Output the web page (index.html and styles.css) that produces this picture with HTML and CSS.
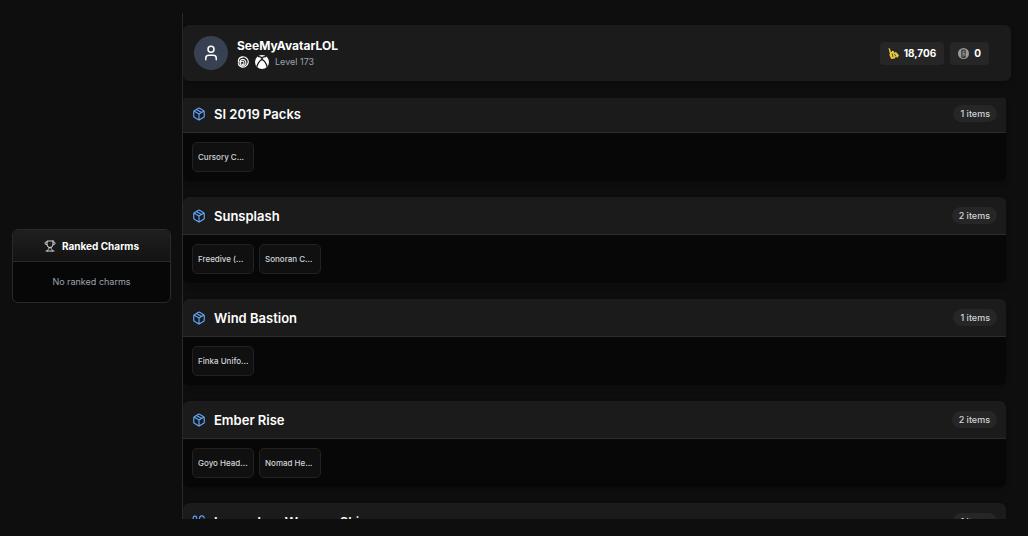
FILE: index.html
```html
<!DOCTYPE html>
<html lang="en">
<head>
<meta charset="utf-8">
<title>Inventory</title>
<link rel="stylesheet" href="styles.css">
</head>
<body>
<svg class="defs" aria-hidden="true">
  <symbol id="package" viewBox="0 0 24 24"><path d="M11 21.73a2 2 0 0 0 2 0l7-4A2 2 0 0 0 21 16V8a2 2 0 0 0-1-1.73l-7-4a2 2 0 0 0-2 0l-7 4A2 2 0 0 0 3 8v8a2 2 0 0 0 1 1.73zM12 22V12M3.3 7l8.7 5 8.7-5M7.5 4.27l9 5.15"/></symbol>
</svg>
<div class="page">
  <aside class="sidebar">
    <section class="charms">
      <h2 class="charms-title">
        <svg class="line-icon trophy" viewBox="0 0 24 24"><path d="M6 9H4.5a2.5 2.5 0 0 1 0-5H6M18 9h1.5a2.5 2.5 0 0 0 0-5H18M4 22h16M10 14.66V17c0 .55-.47.98-.97 1.21C7.85 18.75 7 20.24 7 22M14 14.66V17c0 .55.47.98.97 1.21C16.15 18.75 17 20.24 17 22M18 2H6v7a6 6 0 0 0 12 0V2Z"/></svg>
        Ranked Charms
      </h2>
      <p class="charms-empty">No ranked charms</p>
    </section>
  </aside>
  <main class="content">
    <header class="profile">
      <div class="avatar"><svg class="line-icon user" viewBox="0 0 24 24"><circle cx="12" cy="7" r="4"/><path d="M19 21v-2a4 4 0 0 0-4-4H9a4 4 0 0 0-4 4v2"/></svg></div>
      <div class="identity">
        <h1 class="name">SeeMyAvatarLOL</h1>
        <div class="meta">
          <svg class="ubisoft" viewBox="0 0 24 24" fill="none" stroke="#fff"><path d="M2.2 14.5A10.3 10.3 0 1 0 4 5.5" stroke-width="2.4"/><path d="M3 13C1.5 6 6 2 11.5 2.2" stroke-width="2.4"/><path d="M5.5 14.5C5 8 11 5 15 8s4 9-1 11-9-2-7-6 7-3 7 1-4 4-4 1" stroke-width="2.2"/></svg>
          <svg class="xbox" viewBox="0 0 24 24"><circle cx="12" cy="12" r="12" fill="#fff"/><path d="M5 2.800C8 2.300 10.400 3.600 12 4.800c1.600-1.200 4-2.500 7-2M12 7.200C7.500 10.500 4 15.500 3.600 20M12 7.200c4.500 3.300 8 8.300 8.400 12.800" fill="none" stroke="#1b1b1b" stroke-width="2.300"/><path d="M12 8 9.500 5.500h5Z" fill="#1b1b1b"/></svg>
          <span>Level 173</span>
        </div>
      </div>
      <div class="wallet">
        <div class="coin">
          <svg class="coin-icon" viewBox="0 0 24 24"><path d="M1 0l3 1 3 8 2-3 4 1 1 4 3-3 7 8-3 5-4-2-2 4-8 1-4-9 1-3Z" fill="#e6cc3a"/><path d="M9 12l2 8M14 13l3 5" fill="none" stroke="#4c421a" stroke-width="2"/></svg>
          <span>18,706</span>
        </div>
        <div class="coin">
          <svg class="coin-icon" viewBox="0 0 24 24"><circle cx="12" cy="12" r="12" fill="#999"/><path d="M8 3h8l1 3v14l-2 2H9l-2-2V6Z" fill="#3a3a3a"/><path d="M11 19V7h4M11 12h4v5" fill="none" stroke="#999" stroke-width="2"/></svg>
          <span>0</span>
        </div>
      </div>
    </header>
    <div class="scroller">
      <div class="groups">
        <section class="group">
          <header class="group-head"><svg class="line-icon box"><use href="#package"/></svg><h2 class="group-title">SI 2019 Packs</h2><span class="count">1 items</span></header>
          <div class="items"><div class="item">Cursory C...</div></div>
        </section>
        <section class="group">
          <header class="group-head"><svg class="line-icon box"><use href="#package"/></svg><h2 class="group-title">Sunsplash</h2><span class="count">2 items</span></header>
          <div class="items"><div class="item">Freedive (...</div><div class="item">Sonoran C...</div></div>
        </section>
        <section class="group">
          <header class="group-head"><svg class="line-icon box"><use href="#package"/></svg><h2 class="group-title">Wind Bastion</h2><span class="count">1 items</span></header>
          <div class="items"><div class="item">Finka Unifo...</div></div>
        </section>
        <section class="group">
          <header class="group-head"><svg class="line-icon box"><use href="#package"/></svg><h2 class="group-title">Ember Rise</h2><span class="count">2 items</span></header>
          <div class="items"><div class="item">Goyo Head...</div><div class="item">Nomad He...</div></div>
        </section>
        <section class="group">
          <header class="group-head"><svg class="line-icon box" viewBox="0 0 24 24"><path d="M2 9V5a3 3 0 0 1 6 0v4l6 6M13 19l6-6M16 16l4 4M19 21l2-2M13 8V6a4 4 0 0 1 8-1M5 14l4 4M7 17l-3 3M3 19l2 2"/></svg><h2 class="group-title">Legendary Weapon Skins</h2><span class="count">1 items</span></header>
          <div class="items"></div>
        </section>
      </div>
    </div>
  </main>
</div>
</body>
</html>
```
FILE: styles.css
```css
* { box-sizing: border-box; }
body {
  margin: 0;
  background: #0e0e0e;
  color: #fff;
  font-family: Inter, "Liberation Sans", sans-serif;
}
h1, h2, p { margin: 0; }
.defs { display: none; }
.page {
  display: flex;
  height: 100vh;
  padding: 13px 17px 17px 12px;
  gap: 11px;
  overflow: hidden;
}
.line-icon {
  flex: none;
  fill: none;
  stroke: currentColor;
  stroke-width: 2;
  stroke-linecap: round;
  stroke-linejoin: round;
}
.sidebar {
  flex: 0 0 159px;
  display: flex;
  flex-direction: column;
  justify-content: center;
}
.charms {
  border: 1px solid #2a2a2a;
  border-radius: 6px;
  background: #070707;
  overflow: hidden;
}
.charms-title {
  display: flex;
  align-items: center;
  justify-content: center;
  gap: 6px;
  height: 32px;
  border-bottom: 1px solid #2a2a2a;
  background: linear-gradient(#1f1f1f, #131313);
  font-size: 10px;
  font-weight: 700;
}
.trophy { width: 12px; height: 12px; color: #d1d5db; }
.charms-empty {
  padding: 12px;
  color: #9ca3af;
  font-size: 9px;
  line-height: 16px;
  text-align: center;
}
.content {
  flex: 1;
  min-width: 0;
  display: flex;
  flex-direction: column;
  gap: 17px;
  padding-top: 12px;
  border-left: 1px solid #2a2a2a;
}
.profile {
  flex: none;
  display: flex;
  align-items: center;
  gap: 9px;
  padding: 11px 22px 11px 11px;
  border-radius: 6px;
  background: #1b1b1b;
  box-shadow: 0 3px 6px #00000033;
}
.avatar {
  display: grid;
  place-items: center;
  width: 34px;
  height: 34px;
  border-radius: 50%;
  background: #374151;
}
.user { width: 18px; height: 18px; }
.identity { flex: 1; }
.name { font-size: 12px; font-weight: 700; line-height: 17px; }
.meta {
  display: flex;
  align-items: center;
  gap: 6px;
  height: 16px;
  color: #9ca3af;
  font-size: 9px;
}
.ubisoft { width: 12px; height: 12px; }
.xbox { width: 14px; height: 14px; }
.wallet { display: flex; gap: 6px; }
.coin {
  display: flex;
  align-items: center;
  gap: 5px;
  height: 23px;
  padding: 0 8px;
  border-radius: 4px;
  background: #262626;
  font-size: 10px;
  font-weight: 700;
}
.coin-icon { width: 11px; height: 11px; }
.scroller {
  flex: 1;
  min-height: 0;
  overflow: hidden;
  padding-right: 5px;
}
.groups {
  display: flex;
  flex-direction: column;
  gap: 16px;
  margin-top: -3px;
}
.group {
  border-radius: 6px;
  background: #070707;
  box-shadow: 0 3px 6px #00000033;
}
.group-head {
  display: flex;
  align-items: center;
  gap: 8px;
  height: 38px;
  padding: 0 9px;
  border-bottom: 1px solid #2c2c2c;
  border-radius: 6px 6px 0 0;
  background: #1b1b1b;
}
.box { width: 14px; height: 14px; color: #60a5fa; }
.group-title { flex: 1; font-size: 13px; font-weight: 600; }
.count {
  padding: 0 7px;
  border-radius: 9px;
  background: #262626;
  color: #d1d5db;
  font-size: 9px;
  font-weight: 500;
  line-height: 17px;
}
.items {
  display: flex;
  gap: 5px;
  height: 48px;
  padding: 9px;
}
.item {
  width: 62px;
  padding: 0 5px;
  border: 1px solid #222;
  border-radius: 5px;
  background: #101010;
  color: #d1d5db;
  font-size: 8px;
  font-weight: 500;
  line-height: 28px;
  white-space: nowrap;
}
```
